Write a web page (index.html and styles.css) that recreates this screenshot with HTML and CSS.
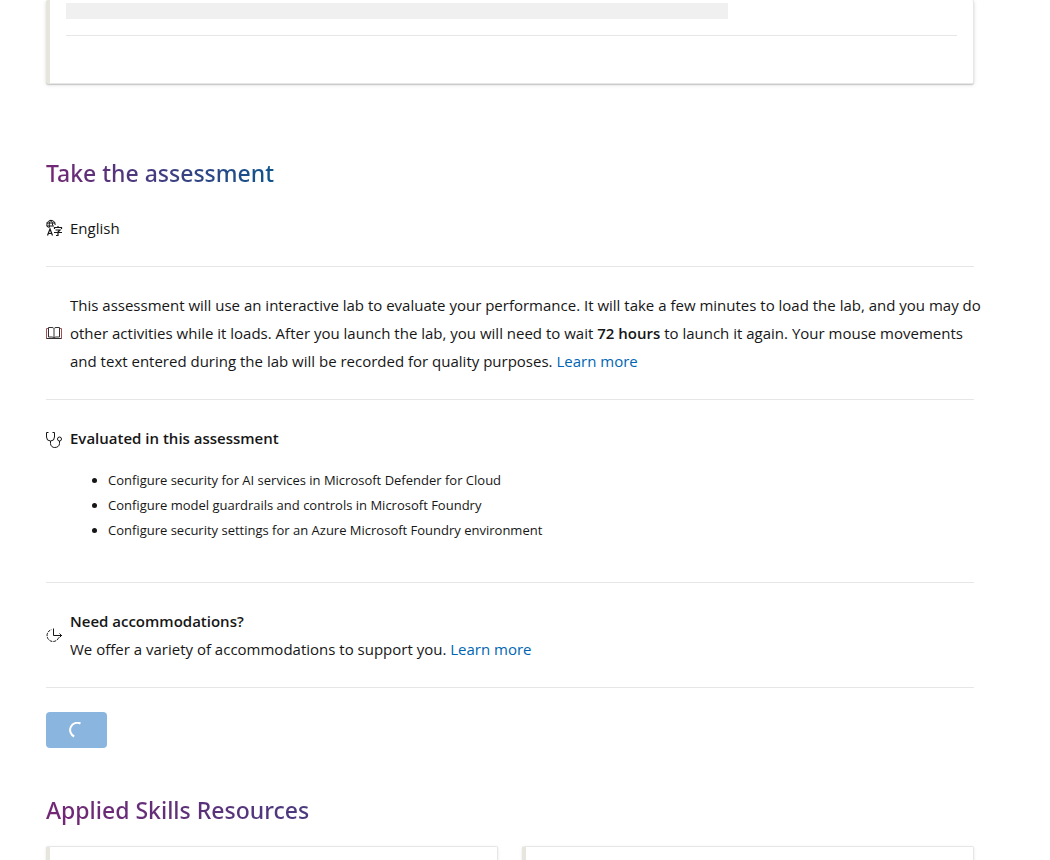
FILE: index.html
```html
<!DOCTYPE html>
<html lang="en">
<head>
<meta charset="utf-8">
<title>Applied Skills assessment</title>
<link rel="stylesheet" href="styles.css">
</head>
<body>
<main class="page">
  <section class="card card-loading" aria-label="Loading">
    <div class="skeleton"></div>
    <hr class="card-rule">
  </section>

  <section class="assessment">
    <h2 class="heading"><span class="gradient gradient-short">Take the assessment</span></h2>
    <div class="row row-middle">
      <svg class="icon" viewBox="0 0 16 16" aria-hidden="true"><g fill="none" stroke="currentColor"><path d="M2.500 7.800A4.200 4.200 0 1 1 9.200 5M.5 3h8.500M.5 6H8M3.500 7.500C2.800 4 3.500 1 4.800.5 6 1 6.800 3 6.500 5.500"/><path stroke-width="1.200" d="M1.500 15.500 4 9l2.500 6.500M2.500 13.500h3M8.500 9V7.500h7V9M12 6v1.500M9.500 10h4.500l-2 2v3.500h-2M8 12.500h8"/></g></svg>
      <p class="text">English</p>
    </div>
    <div class="row row-middle">
      <svg class="icon" viewBox="0 0 16 16" aria-hidden="true"><g fill="none"><path stroke="#a05050" d="M2.500 3.500h-2v10h5.500M13.500 3.500h2v10H10"/><path stroke="#333" d="M2.500 2.500H6q1.500 0 2 1 .5-1 2-1h3.500v9.500H10q-1.500 0-2 1-.5-1-2-1H2.500zM8 3.500v9.500M.5 13.500h15"/></g></svg>
      <p class="text text-wide">This assessment will use an interactive lab to evaluate your performance. It will take a few minutes to load the lab, and you may do other activities while it loads. After you launch the lab, you will need to wait <strong>72 hours</strong> to launch it again. Your mouse movements and text entered during the lab will be recorded for quality purposes. <a class="link" href="#">Learn more</a></p>
    </div>
    <div class="row">
      <svg class="icon icon-heading" viewBox="0 0 16 16" aria-hidden="true"><g fill="none" stroke="currentColor"><path d="M2.500.5h-2v4.500a4 4 0 0 0 8 0V.5h-2M4.500 9v2.500a4 4 0 0 0 4.300 4c2.800 0 4.700-1.700 4.700-4V9"/><circle cx="13.500" cy="7" r="2"/></g></svg>
      <div>
        <h3 class="subheading">Evaluated in this assessment</h3>
        <ul class="skill-list">
          <li>Configure security for AI services in Microsoft Defender for Cloud</li>
          <li>Configure model guardrails and controls in Microsoft Foundry</li>
          <li>Configure security settings for an Azure Microsoft Foundry environment</li>
        </ul>
      </div>
    </div>
    <div class="row row-middle">
      <svg class="icon" viewBox="0 0 16 16" aria-hidden="true"><g fill="none" stroke="currentColor"><path stroke-dasharray="3 1" d="M12.700 10.500A6 6 0 1 1 5.500 2.700"/><path d="M7.500 1.500v7H16M13.500 6.500l2 2-2 2"/></g></svg>
      <div>
        <h3 class="subheading">Need accommodations?</h3>
        <p class="text">We offer a variety of accommodations to support you. <a class="link" href="#">Learn more</a></p>
      </div>
    </div>
    <button class="launch" type="button" disabled aria-label="Loading"><svg class="spinner" viewBox="0 0 16 16" aria-hidden="true"><path fill="none" stroke="#fff" stroke-width="2" d="M11.500 1.500A6.800 6.800 0 0 0 5.200 14.500"/></svg></button>
  </section>

  <section class="resources">
    <h2 class="heading"><span class="gradient gradient-long">Applied Skills Resources</span></h2>
    <div class="resource-grid">
      <article class="card resource"></article>
      <article class="card resource"></article>
    </div>
  </section>
</main>
</body>
</html>
```

FILE: styles.css
```css
* { box-sizing: border-box; }
body { margin: 0; background: #fff; color: #161616; font: 15px/28px "Open Sans", "Noto Sans", sans-serif; }
h2, h3, p, ul { margin: 0; }
.page { padding: 0 76px 0 46px; }
.card { background: #fff; border: 1px solid #e6e6e6; border-left: 4px solid #e6e6df; border-radius: 2px; box-shadow: 0 1px 3px rgba(0, 0, 0, .1); }
.card-loading { border-top: 0; padding: 3px 16px 47px; box-shadow: 0 1px 1px rgba(0, 0, 0, .16), 0 1px 4px rgba(0, 0, 0, .12); }
.skeleton { width: 74.3%; height: 16px; background: #f0f0f0; }
.card-rule { height: 1px; margin: 16px 0 0; border: 0; background: #e6e6e6; }
.assessment { padding-top: 73px; }
.heading { margin-bottom: 1px; font: 500 23px/32px "Noto Sans", sans-serif; }
.gradient { display: inline-block; color: transparent; background: linear-gradient(90deg, #742774, #0f548c); background-clip: text; -webkit-background-clip: text; }
.gradient-long { background-image: linear-gradient(90deg, #742774, #0f548c 240%); }
.row { display: flex; gap: 8px; padding: 24px 0; border-bottom: 1px solid #e6e6e6; }
.row-middle { align-items: center; }
.text-wide { margin-right: -12px; }
.icon { flex: none; width: 16px; height: 16px; color: #161616; overflow: visible; }
.icon-heading { margin-top: 8px; }
.subheading { font-size: 15px; line-height: 28px; font-weight: 600; }
strong { font-weight: 600; }
.link { color: #0065b3; text-decoration: none; }
.skill-list { margin: 16px 0 15px; padding-left: 38px; font-size: 13px; line-height: 25px; }
.launch { display: grid; place-items: center; width: 61px; height: 36px; margin-top: 24px; padding: 0; border: 0; border-radius: 4px; background: #8ab5df; }
.spinner { width: 16px; height: 16px; }
.resources { padding-top: 46px; }
.resource-grid { display: grid; grid-template-columns: 1fr 1fr; gap: 24px; margin-top: 20px; }
.resource { height: 100px; }
```
